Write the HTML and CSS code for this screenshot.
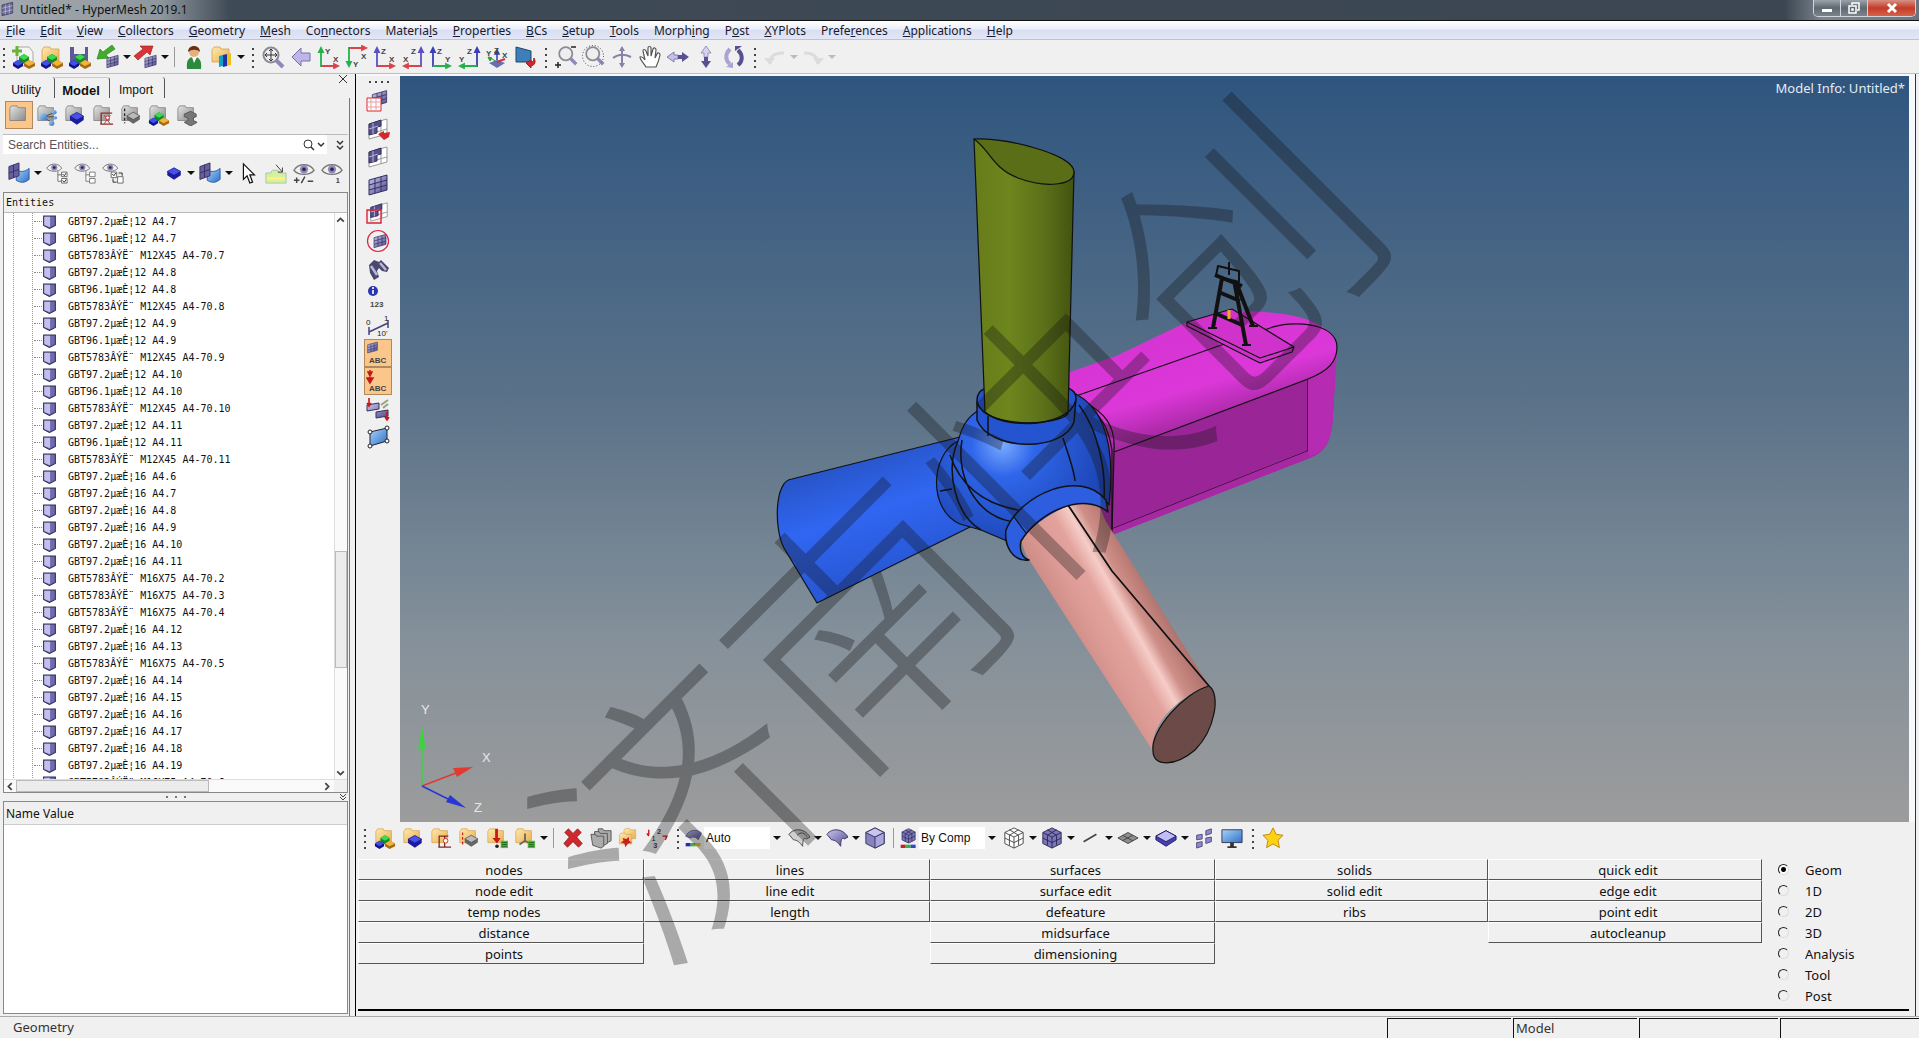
FILE: index.html
```
<!DOCTYPE html>
<html lang="en">
<head>
    <meta charset="UTF-8">
    <meta name="viewport" content="width=device-width, initial-scale=1.0">
    <title>Untitled* - HyperMesh 2019.1</title>
    <link rel="stylesheet" href="styles.css">
</head>
<body>
    <!-- Icon sprite, every icon on a 24x24 grid -->
    <svg class="sprite" aria-hidden="true">
        <defs>
            <linearGradient id="gGrey" x1="0" y1="0" x2="1" y2="1"><stop offset="0" stop-color="#e4e4e4"/><stop offset="1" stop-color="#8a8a8a"/></linearGradient>
            <linearGradient id="gGold" x1="0" y1="0" x2="1" y2="1"><stop offset="0" stop-color="#ffe9b0"/><stop offset="1" stop-color="#e9b04c"/></linearGradient>
            <linearGradient id="gViolet" x1="0" y1="0" x2="1" y2="1"><stop offset="0" stop-color="#c9c5ee"/><stop offset="1" stop-color="#4e4a8c"/></linearGradient>
            <linearGradient id="gBlue" x1="0" y1="0" x2="1" y2="1"><stop offset="0" stop-color="#a8d4f8"/><stop offset="1" stop-color="#2f6fc8"/></linearGradient>
        </defs>
        <symbol id="folder-grey" viewBox="0 0 24 24"><path d="M2 5l2-3h6l1 2h8v14H2z" fill="url(#gGrey)" stroke="#777" stroke-width=".8"/></symbol>
        <symbol id="folder-gold" viewBox="0 0 24 24"><path d="M2 5l2-3h6l1 2h8v13H2z" fill="url(#gGold)" stroke="#d2a24c" stroke-width=".8"/></symbol>
        <symbol id="cube-blue" viewBox="0 0 24 24"><path d="M3 10l9-5 9 5v5l-9 6-9-6z" fill="#1c1c9c"/><path d="M3 10l9-5 9 5-9 5z" fill="#4a50f0" stroke="#16167c" stroke-width=".8"/></symbol>
        <symbol id="cube-grey" viewBox="0 0 24 24"><path d="M3 10l9-5 9 5v5l-9 6-9-6z" fill="#666"/><path d="M3 10l9-5 9 5-9 5z" fill="#b9b9b9" stroke="#444" stroke-width=".8"/></symbol>
        <symbol id="cubes" viewBox="0 0 24 24">
            <path d="M7 12l5-3 5 3v4l-5 3-5-3z" fill="#17882a"/><path d="M7 12l5-3 5 3-5 3z" fill="#3bdc4c"/>
            <path d="M1 18l5-3 5 3v3l-5 3-5-3z" fill="#12128a"/><path d="M1 18l5-3 5 3-5 3z" fill="#3c52e6"/>
            <path d="M12 18l5-3 6 3v3l-6 3-5-3z" fill="#a76c10"/><path d="M12 18l5-3 6 3-6 3z" fill="#f0b440"/>
        </symbol>
        <symbol id="gold-cubes" viewBox="0 0 24 24"><use href="#folder-gold"/><use href="#cubes"/></symbol>
        <symbol id="gold-block" viewBox="0 0 24 24"><use href="#folder-gold"/><use href="#cube-blue" x="4" y="5" width="20" height="20"/></symbol>
        <symbol id="gold-load" viewBox="0 0 24 24"><use href="#folder-gold"/><path d="M10 22V10h10M9 22h14M16 10v12" fill="none" stroke="#7c2a20" stroke-width="1.4"/><circle cx="17" cy="15" r="2.5" fill="#fff" stroke="#c33"/></symbol>
        <symbol id="gold-tag" viewBox="0 0 24 24"><use href="#folder-gold"/><path d="M5 6v14" stroke="#c22" stroke-width="1.4" stroke-dasharray="3 2"/><use href="#cube-grey" x="5" y="5" width="19" height="19"/></symbol>
        <symbol id="gold-down" viewBox="0 0 24 24"><use href="#folder-gold"/><path d="M10 2h3v10h3l-4 6-5-6h3z" fill="#c5181a"/><circle cx="12" cy="21" r="2" fill="#222"/><path d="M16 15h8v8h-8z" fill="#4fc03c"/><path d="M17 17h6M17 19h6M17 21h6" stroke="#205c18"/></symbol>
        <symbol id="gold-sys" viewBox="0 0 24 24"><use href="#folder-gold"/><path d="M12 7v8l-6 4M12 15l5 3" fill="none" stroke="#666" stroke-width="2"/><path d="M15 15h8v8h-8z" fill="#4fc03c"/><path d="M16 17h6M16 19h6M16 21h6" stroke="#205c18"/></symbol>
        <symbol id="grey-link" viewBox="0 0 24 24"><use href="#folder-grey"/><path d="M8 14l13-5M8 14l12 0M8 14l10 7" stroke="#444"/><circle cx="8" cy="14" r="4" fill="url(#gBlue)"/><circle cx="20" cy="9" r="2.500" fill="url(#gBlue)"/><circle cx="21" cy="15" r="2" fill="url(#gBlue)"/><circle cx="17" cy="21" r="3" fill="url(#gBlue)"/></symbol>
        <symbol id="grey-block" viewBox="0 0 24 24"><use href="#folder-grey"/><use href="#cube-blue" x="4" y="5" width="20" height="20"/></symbol>
        <symbol id="grey-load" viewBox="0 0 24 24"><use href="#folder-grey"/><path d="M10 22V10h12M9 22h14" fill="none" stroke="#8c3028" stroke-width="1.500"/><path d="M13 12l7 10M20 12l-7 10" stroke="#c33"/><circle cx="17" cy="15" r="2" fill="#fff" stroke="#c33"/></symbol>
        <symbol id="grey-tag" viewBox="0 0 24 24"><use href="#folder-grey"/><path d="M5 5v16" stroke="#222" stroke-width="1.400" stroke-dasharray="3 2"/><use href="#cube-grey" x="5" y="5" width="19" height="19"/></symbol>
        <symbol id="grey-cubes" viewBox="0 0 24 24"><use href="#folder-grey"/><use href="#cubes"/></symbol>
        <symbol id="grey-beam" viewBox="0 0 24 24"><use href="#folder-grey"/><path d="M9 11l7-3 6 3v3l-3 1v3l4 2-7 4-7-4 4-2v-3l-4-1z" fill="#777" stroke="#555"/></symbol>
        <symbol id="new" viewBox="0 0 24 24"><path d="M5 2h12l4 5v14H5z" fill="#f4f4f4" stroke="#aaa"/><path d="M5 1v10M0 6h10" stroke="#69b234" stroke-width="3"/><use href="#cubes"/></symbol>
        <symbol id="save" viewBox="0 0 24 24"><path d="M2 2h18v18H4l-2-2z" fill="#5d5a94"/><path d="M6 2h11v7H6z" fill="#eee"/><use href="#cubes"/></symbol>
        <symbol id="mesh" viewBox="0 0 24 24"><path d="M3 7l18-5v15L3 22z" fill="url(#gViolet)" stroke="#34305e"/><path d="M9 5v15M15 4v15M3 12l18-5M3 17l18-5" stroke="#34305e" fill="none"/></symbol>
        <symbol id="import" viewBox="0 0 24 24"><use href="#mesh" x="9" y="9" width="15" height="15"/><path d="M16 0l3 4-9 6 3 3-12 1 3-10 3 3z" fill="#3fae2b" stroke="#24751a" stroke-width=".6"/></symbol>
        <symbol id="export" viewBox="0 0 24 24"><use href="#mesh" x="9" y="9" width="15" height="15"/><path d="M0 11l9-7-3-3h13l-3 9-3-3-9 8z" fill="#dc3436" stroke="#96191b" stroke-width=".6"/></symbol>
        <symbol id="person" viewBox="0 0 24 24"><path d="M5 24c-1-9 2-12 7-12s8 3 7 12z" fill="#2b8a3e"/><path d="M10 12l2 6 3-6z" fill="#fff"/><circle cx="12" cy="7" r="5" fill="#e6b07c"/><path d="M6 7c0-8 12-8 12 0-3-3-8-3-12 0z" fill="#6b2f14"/></symbol>
        <symbol id="palette" viewBox="0 0 24 24"><use href="#folder-gold"/><path d="M9 11l4-1v11l-4 1z" fill="#11a0c8"/><path d="M13 10l4-1v12l-4 1z" fill="#2330a8"/><path d="M17 9l4-1v12l-4 1z" fill="#e8c020"/></symbol>
        <symbol id="lens" viewBox="0 0 24 24"><path d="M15 15l7 7" stroke="#8e88bd" stroke-width="4"/><circle cx="10" cy="10" r="7.500" fill="#eee" stroke="#8b8b95" stroke-width="2"/></symbol>
        <symbol id="lens-fit" viewBox="0 0 24 24"><use href="#lens"/><path d="M10 4v12M4 10h12M8 6l2-2 2 2M8 14l2 2 2-2M6 8l-2 2 2 2M14 8l2 2-2 2" stroke="#333" fill="none"/></symbol>
        <symbol id="lens-pm" viewBox="0 0 24 24"><use href="#lens" x="3" width="21" height="21"/><path d="M1 20h6M4 17v6M17 2h5" stroke="#222" stroke-width="1.500"/></symbol>
        <symbol id="lens-box" viewBox="0 0 24 24"><use href="#lens" x="2" width="21" height="21"/><circle cx="11" cy="11" r="10.500" fill="none" stroke="#444" stroke-dasharray="1 2"/></symbol>
        <symbol id="back" viewBox="0 0 24 24"><path d="M3 12l9-9v5h9v8h-9v5z" fill="#bdb6e6" stroke="#7770ad"/></symbol>
        <symbol id="ax-v" viewBox="0 0 24 24"><path d="M4 22V6M2 7l2-4 2 4z" fill="currentColor" stroke="currentColor" stroke-width="1.800"/></symbol>
        <symbol id="ax-h" viewBox="0 0 24 24"><path d="M4 21h14M17 19l4 2-4 2z" fill="currentColor" stroke="currentColor" stroke-width="1.800"/></symbol>
        <symbol id="iso" viewBox="0 0 24 24"><path d="M12 15V6M12 5l-2 4h4z" stroke="#2f3fae" fill="#2f3fae" stroke-width="1.500"/><path d="M12 17L4 12M3 12l2 4 2-3z" stroke="#2f9a3c" fill="#2f9a3c"/><path d="M12 15l-8 3 8 5 8-5z" fill="#6670b0"/><path d="M12 17l8-3" stroke="#c33" stroke-width="2"/></symbol>
        <symbol id="view-shade" viewBox="0 0 24 24"><path d="M3 2l15 4v11L3 17z" fill="#3d7fb8" stroke="#23486b"/><path d="M13 18l5-3v2c2 0 3-1 3-4 2 4 1 7-3 8v2z" fill="#d4272a" stroke="#a31a1c"/></symbol>
        <symbol id="rot" viewBox="0 0 24 24"><path d="M12 3v18M3 13c5-4 12-4 18-1" fill="none" stroke="#8882a8" stroke-width="2"/><path d="M9 6l3-5 3 5zM9 18l3 5 3-5z" fill="#8882a8"/></symbol>
        <symbol id="hand" viewBox="0 0 24 24"><path d="M8 22c-2-4-6-7-6-10 2-1 3 0 5 3L5 6c0-2 2-2 3 0l2 5V3c0-2 3-2 3 0v8l2-7c1-2 3-1 3 1l-1 8 2-4c1-2 3-1 3 1-1 5-2 8-4 12z" fill="#fff" stroke="#555" stroke-width="1.200"/></symbol>
        <symbol id="lr" viewBox="0 0 24 24"><path d="M1 12l7-5v3h4v4H8v3z" fill="#c6c1e6" stroke="#6e68a0" stroke-width=".8"/><path d="M23 12l-7-5v3h-4v4h4v3z" fill="#575193"/></symbol>
        <symbol id="ud" viewBox="0 0 24 24"><path d="M12 1L7 8h3v4h4V8h3z" fill="#d6d2ee" stroke="#8882b8" stroke-width=".8"/><path d="M12 23l-5-7h3v-4h4v4h3z" fill="#575193"/></symbol>
        <symbol id="spin" viewBox="0 0 24 24"><path d="M8 4c-5 5-5 11 0 15" fill="none" stroke="#aaa4d2" stroke-width="4"/><path d="M16 5c5 5 5 11 0 15" fill="none" stroke="#575193" stroke-width="4"/><path d="M4 22l7-5v6z" fill="#aaa4d2"/><path d="M20 1l-7 5V1z" fill="#575193"/></symbol>
        <symbol id="undo" viewBox="0 0 24 24"><path d="M7 19c0-8 4-11 14-11" fill="none" stroke="#dcdcdc" stroke-width="3"/><path d="M1 13l6 7 5-7z" fill="#dcdcdc"/></symbol>
        <symbol id="redo" viewBox="0 0 24 24"><path d="M3 8c9 0 14 3 14 11" fill="none" stroke="#dcdcdc" stroke-width="3"/><path d="M12 13l5 7 6-7z" fill="#dcdcdc"/></symbol>
        <symbol id="comp" viewBox="0 0 24 24"><path d="M9 9c5 2 9 2 14-2v12c-5 4-9 4-14 1z" fill="url(#gBlue)" stroke="#285aa8"/><path d="M1 5l11-4v14L1 19z" fill="#6660a0" stroke="#34305e"/><path d="M6 3v14M1 12l11-4" stroke="#34305e"/></symbol>
        <symbol id="eye" viewBox="0 0 24 24"><path d="M1 9c5-8 17-8 22 0-5 6-17 6-22 0z" fill="#f2f2f2" stroke="#777" stroke-width="1.400"/><circle cx="12" cy="8" r="4.500" fill="#8d88b8"/><circle cx="12" cy="8" r="2" fill="#2b2850"/></symbol>
        <symbol id="eye-on" viewBox="0 0 24 24"><use href="#eye" width="18" height="18"/><path d="M13 10v11h4M13 14h4M17 11h6v5h-6zM17 18h6v5h-6z" fill="#fff" stroke="#666"/><path d="M18 13l2 2 2-3M18 20l2 2 2-3" fill="none" stroke="#222"/></symbol>
        <symbol id="eye-off" viewBox="0 0 24 24"><use href="#eye" width="18" height="18"/><path d="M13 10v11h4M13 14h4M17 11h6v5h-6zM17 18h6v5h-6z" fill="#fff" stroke="#777"/></symbol>
        <symbol id="eye-swap" viewBox="0 0 24 24"><use href="#eye" width="18" height="18"/><path d="M10 11h6v6h-6zM17 16h6v7h-6z" fill="#fff" stroke="#666"/><path d="M11 13l2 2 2-3M18 12h4v3M12 18v4h4" fill="none" stroke="#222"/></symbol>
        <symbol id="eye-pm" viewBox="0 0 24 24"><use href="#eye"/><path d="M1 20h6M4 17v6M9 23l4-7M16 21h6" stroke="#444" stroke-width="1.600"/></symbol>
        <symbol id="pointer" viewBox="0 0 24 24"><path d="M7 2v17l4-4 3 8 3-1-3-8h5z" fill="#fff" stroke="#111" stroke-width="1.300"/></symbol>
        <symbol id="pick" viewBox="0 0 24 24"><path d="M1 12h5l2-3h6l2 3h7v11H1z" fill="#d6efa0" stroke="#9fc6a4"/><path d="M2 18h20" stroke="#fff07a" stroke-width="3"/><path d="M12 3l7 8M19 6v5h-5" stroke="#333" fill="none"/></symbol>
        <symbol id="m-box" viewBox="0 0 24 24"><use href="#mesh" x="3" width="21" height="19"/><path d="M1 9h14v13H1z" fill="#fff" stroke="#d23"/><path d="M5 9v13M10 9v13M1 13h14M1 18h14" stroke="#e99"/></symbol>
        <symbol id="m-wire" viewBox="0 0 24 24"><path d="M3 7l18-5v15L3 22zM15 4v15M3 17l18-5" fill="#fff" stroke="#999"/><path d="M3 7l12-4v6l-4 1v6l-8 2z" fill="#54508c" stroke="#34305e"/><path d="M7 6v11M3 12l9-3" stroke="#b8b4dc"/></symbol>
        <symbol id="m-arrow" viewBox="0 0 24 24"><use href="#m-wire"/><path d="M12 17l6-3v2l6-1-1 5-5 3z" fill="#d4272a"/></symbol>
        <symbol id="m-find" viewBox="0 0 24 24"><use href="#m-wire" x="2" width="22" height="22"/><path d="M1 9h14v13H1z" fill="none" stroke="#d23" stroke-width="1.400"/></symbol>
        <symbol id="m-circle" viewBox="0 0 24 24"><use href="#mesh" x="6" y="4" width="16" height="16"/><circle cx="12" cy="12" r="10.500" fill="none" stroke="#d24" stroke-width="1.200"/></symbol>
        <symbol id="binoc" viewBox="0 0 24 24"><path d="M3 8l5-5 5 2 2-2 8 8-2 4-5-1-3-3-2 3 2 6-5 3-4-7z" fill="#4b4870"/><path d="M5 9l6 9M14 6l6 7" stroke="#b9b6d8" stroke-width="2.500"/></symbol>
        <symbol id="m-load" viewBox="0 0 24 24"><path d="M1 8l12-2v6L1 14zM10 15l12-2v6l-12 2z" fill="url(#gViolet)" stroke="#34305e"/><path d="M3 1v7M21 15v8M1 6l2 3 2-3M19 20l2 3 2-3" stroke="#c5181a" stroke-width="1.600" fill="none"/><path d="M15 8l7-5M17 11l5-4" stroke="#99a37a" stroke-width="2"/></symbol>
        <symbol id="quad" viewBox="0 0 24 24"><path d="M4 7l17-4v13L4 21z" fill="url(#gBlue)" stroke="#223"/><g fill="#fff" stroke="#222"><circle cx="4" cy="7" r="2"/><circle cx="21" cy="3" r="2"/><circle cx="21" cy="16" r="2"/><circle cx="4" cy="21" r="2"/></g></symbol>
        <symbol id="del" viewBox="0 0 24 24"><path d="M3 6l4-4 5 5 5-5 4 4-5 5 6 7-4 4-6-6-6 6-4-4 6-7z" fill="#d0282c" stroke="#851418" stroke-width=".8"/></symbol>
        <symbol id="cards" viewBox="0 0 24 24"><g fill="#ababab" stroke="#555"><path d="M9 2h5l1 2h8v11l-4 2H9z"/><path d="M5 5h5l1 2h8v11l-4 2H5z"/><path d="M1 8h5l1 2h8v11l-3 2-9-3z"/></g></symbol>
        <symbol id="gold-x" viewBox="0 0 24 24"><use href="#folder-gold" x="5" width="18" height="18"/><use href="#folder-gold" y="5" width="19" height="19"/><path d="M5 12l4 1 3-2v4l3 2-4 1-3 4-1-4-4-1 3-2z" fill="#c9211e"/></symbol>
        <symbol id="surf-mode" viewBox="0 0 24 24"><path d="M2 10C5 3 14 0 21 6l-4 8c-3-4-7-4-9-2z" fill="url(#gViolet)" stroke="#5c5898"/><path d="M2 18h6v4H2z" fill="#2330a8"/><path d="M8 18h6v4H8z" fill="#38b04a"/><path d="M14 18h6v4h-6z" fill="#e8c020"/></symbol>
        <symbol id="surf-grey" viewBox="0 0 24 24"><path d="M1 8C6 1 18 1 24 11l-4 2c-2-2-4 0-4 8-3-4-6-7-10-7z" fill="#cfcfcf" stroke="#444"/><path d="M10 9c4-4 8-3 11 2" fill="none" stroke="#444"/></symbol>
        <symbol id="surf-violet" viewBox="0 0 24 24"><path d="M1 8C6 1 18 1 24 11l-4 2c-2-2-4 0-4 8-3-4-6-7-10-7z" fill="url(#gViolet)" stroke="#34305e"/></symbol>
        <symbol id="box" viewBox="0 0 24 24"><path d="M12 1l10 5v12l-10 5-10-5V6z" fill="#8783c0" stroke="#34305e"/><path d="M12 1l10 5-10 5L2 6z" fill="#c9c5ee" stroke="#34305e"/><path d="M12 11v12l10-5V6z" fill="#aaa6dc" stroke="#34305e"/></symbol>
        <symbol id="grid-lines" viewBox="0 0 24 24"><path d="M12 1l10 5v12l-10 5-10-5V6zM2 6l10 5 10-5M12 11v12M2 12l10 5 10-5M7 3l10 6v11M17 3L7 9v11" fill="none" stroke="currentColor"/></symbol>
        <symbol id="box-wire" viewBox="0 0 24 24"><path d="M12 1l10 5v12l-10 5-10-5V6z" fill="#fff"/><use href="#grid-lines" color="#444"/></symbol>
        <symbol id="box-mesh" viewBox="0 0 24 24"><path d="M12 1l10 5v12l-10 5-10-5V6z" fill="#7a76b8"/><use href="#grid-lines" color="#2a2650"/></symbol>
        <symbol id="by-comp" viewBox="0 0 24 24"><use href="#box-mesh" x="2" width="19" height="19"/><path d="M2 20h6v4H2z" fill="#c5202a"/><path d="M8 20h6v4H8z" fill="#38b04a"/><path d="M14 20h6v4h-6z" fill="#3347c8"/></symbol>
        <symbol id="line" viewBox="0 0 24 24"><path d="M5 16L19 8" stroke="#444" stroke-width="1.800"/></symbol>
        <symbol id="shell" viewBox="0 0 24 24"><path d="M1 12l11-6 11 6-11 6z" fill="#8d8d8d" stroke="#444"/><path d="M6 9l11 6M17 9L6 15" stroke="#444"/></symbol>
        <symbol id="slab" viewBox="0 0 24 24"><path d="M1 10l11-6 11 6v4l-11 7-11-7z" fill="#4540b0" stroke="#1d1a66"/><path d="M1 10l11-6 11 6-11 6z" fill="#c2bdf4" stroke="#1d1a66"/></symbol>
        <symbol id="shrink" viewBox="0 0 24 24"><path d="M4 9l6-1v5l-6 1zM14 4l6-2v5l-6 2zM4 17l6-1v5l-6 2zM14 12l6-1v5l-6 2z" fill="#8f8bc4" stroke="#4a4680"/></symbol>
        <symbol id="monitor" viewBox="0 0 24 24"><path d="M1 3h22v14H1z" fill="url(#gBlue)" stroke="#335"/><path d="M10 17h4v4h3v2H7v-2h3z" fill="#333"/></symbol>
        <symbol id="star" viewBox="0 0 24 24"><path d="M12 1l3.500 7 7.500 1-5.500 5.500 1.500 8-7-4-7 4 1.500-8L1 9l7.500-1z" fill="#fcd116" stroke="#b8860b"/></symbol>
        <symbol id="node" viewBox="0 0 24 24"><path d="M2 2h20v16l-10 5-10-5z" fill="#6f6bb0" stroke="#34305e" stroke-width="2"/><path d="M3 3h10v18l-10-4z" fill="#c2c0ea"/></symbol>
        <symbol id="logo" viewBox="0 0 24 24"><path d="M3 6l16-4v16L3 22z" fill="#6d6a96" stroke="#2f2c50"/><path d="M8 5v15M14 4v15M3 11l16-4M3 17l16-4" stroke="#c7c5df"/></symbol>
    </svg>

    <header class="titlebar">
        <svg class="logo"><use href="#logo"/></svg>
        <h1>Untitled* - HyperMesh 2019.1</h1>
        <div class="window-buttons">
            <button aria-label="Minimize"><svg viewBox="0 0 14 12"><path d="M2 7h10v3H2z" fill="#fff"/></svg></button>
            <button aria-label="Restore"><svg viewBox="0 0 14 12"><path d="M5 3V1h7v7h-2M2 4h7v7H2zM5 7h1v1H5z" fill="none" stroke="#fff" stroke-width="1.500"/></svg></button>
            <button class="close" aria-label="Close"><svg viewBox="0 0 14 12"><path d="M3 2l8 8M11 2l-8 8" stroke="#fff" stroke-width="3"/></svg></button>
        </div>
    </header>

    <nav class="menubar">
        <button><u>F</u>ile</button>
        <button><u>E</u>dit</button>
        <button><u>V</u>iew</button>
        <button><u>C</u>ollectors</button>
        <button><u>G</u>eometry</button>
        <button><u>M</u>esh</button>
        <button>Co<u>n</u>nectors</button>
        <button>Materia<u>l</u>s</button>
        <button><u>P</u>roperties</button>
        <button><u>B</u>Cs</button>
        <button><u>S</u>etup</button>
        <button><u>T</u>ools</button>
        <button>Morph<u>i</u>ng</button>
        <button>P<u>o</u>st</button>
        <button><u>X</u>YPlots</button>
        <button>Prefe<u>r</u>ences</button>
        <button><u>A</u>pplications</button>
        <button><u>H</u>elp</button>
    </nav>

    <div class="toolbar top" role="toolbar" aria-label="Standard">
        <div class="group">
            <i class="grip"></i>
            <button aria-label="New"><svg><use href="#new"/></svg></button>
            <button aria-label="Open"><svg><use href="#gold-cubes"/></svg></button>
            <button aria-label="Save"><svg><use href="#save"/></svg></button>
            <button aria-label="Import"><svg><use href="#import"/></svg></button>
            <button class="drop" aria-label="Import options"></button>
            <button aria-label="Export"><svg><use href="#export"/></svg></button>
            <button class="drop" aria-label="Export options"></button>
            <i class="sep"></i>
            <button aria-label="User profile"><svg><use href="#person"/></svg></button>
            <button aria-label="Color folders"><svg><use href="#palette"/></svg></button>
            <button class="drop" aria-label="Color options"></button>
        </div>
        <div class="group">
            <i class="grip"></i>
            <button aria-label="Fit"><svg><use href="#lens-fit"/></svg></button>
            <button aria-label="Previous view"><svg><use href="#back"/></svg></button>
            <button aria-label="XY top"><svg viewBox="0 0 24 24"><use href="#ax-v" color="#22b14c"/><use href="#ax-h" color="#d9434a"/><text x="8" y="9" class="glyph">Y</text><text x="16" y="17" class="glyph">X</text></svg></button>
            <button aria-label="XY bottom"><svg viewBox="0 0 24 24"><g class="flip"><use href="#ax-v" color="#22b14c"/><use href="#ax-h" color="#d9434a"/></g><text x="16" y="14" class="glyph">X</text><text x="8" y="22" class="glyph">Y</text></svg></button>
            <button aria-label="XZ left"><svg viewBox="0 0 24 24"><use href="#ax-v" color="#5a52c0"/><use href="#ax-h" color="#d9434a"/><text x="8" y="9" class="glyph">Z</text><text x="16" y="17" class="glyph">X</text></svg></button>
            <button aria-label="XZ right"><svg viewBox="0 0 24 24"><g class="mirror"><use href="#ax-v" color="#5a52c0"/><use href="#ax-h" color="#d9434a"/></g><text x="10" y="9" class="glyph">Z</text><text x="2" y="17" class="glyph">X</text></svg></button>
            <button aria-label="YZ front"><svg viewBox="0 0 24 24"><use href="#ax-v" color="#3a3fb8"/><use href="#ax-h" color="#22b14c"/><text x="8" y="9" class="glyph">Z</text><text x="16" y="17" class="glyph">Y</text></svg></button>
            <button aria-label="YZ back"><svg viewBox="0 0 24 24"><g class="mirror"><use href="#ax-v" color="#3a3fb8"/><use href="#ax-h" color="#22b14c"/></g><text x="10" y="9" class="glyph">Z</text><text x="2" y="17" class="glyph">Y</text></svg></button>
            <button aria-label="Isometric"><svg viewBox="0 0 24 24"><use href="#iso"/><text x="1" y="11" class="glyph">Y</text><text x="9" y="8" class="glyph">Z</text><text x="17" y="13" class="glyph">X</text></svg></button>
            <button aria-label="Reverse view"><svg><use href="#view-shade"/></svg></button>
        </div>
        <div class="group">
            <i class="grip"></i>
            <button aria-label="Zoom"><svg><use href="#lens-pm"/></svg></button>
            <button aria-label="Circle zoom"><svg><use href="#lens-box"/></svg></button>
            <button aria-label="Rotate"><svg><use href="#rot"/></svg></button>
            <button aria-label="Pan"><svg><use href="#hand"/></svg></button>
            <button aria-label="Rotate left or right"><svg><use href="#lr"/></svg></button>
            <button aria-label="Rotate up or down"><svg><use href="#ud"/></svg></button>
            <button aria-label="Spin"><svg><use href="#spin"/></svg></button>
        </div>
        <div class="group">
            <i class="grip"></i>
            <button aria-label="Undo" disabled><svg><use href="#undo"/></svg></button>
            <button class="drop" aria-label="Undo list" disabled></button>
            <button aria-label="Redo" disabled><svg><use href="#redo"/></svg></button>
            <button class="drop" aria-label="Redo list" disabled></button>
        </div>
    </div>

    <main class="main">
        <aside class="browser">
            <div class="tabs">
                <button>Utility</button>
                <button class="active">Model</button>
                <button>Import</button>
                <button class="close-tab" aria-label="Close browser"><svg viewBox="0 0 10 10"><path d="M1 1l8 8M9 1L1 9" stroke="#333"/></svg></button>
            </div>
            <div class="browser-body">
                <div class="toolbar views">
                    <button class="on" aria-label="Model view"><svg><use href="#folder-grey"/></svg></button>
                    <button aria-label="Assembly view"><svg><use href="#grey-link"/></svg></button>
                    <button aria-label="Component view"><svg><use href="#grey-block"/></svg></button>
                    <button aria-label="Load view"><svg><use href="#grey-load"/></svg></button>
                    <button aria-label="Property view"><svg><use href="#grey-tag"/></svg></button>
                    <button aria-label="Material view"><svg><use href="#grey-cubes"/></svg></button>
                    <button aria-label="Beam view"><svg><use href="#grey-beam"/></svg></button>
                </div>
                <div class="search">
                    <input type="text" placeholder="Search Entities..." aria-label="Search Entities">
                    <button aria-label="Search"><svg viewBox="0 0 24 12"><circle cx="6" cy="5" r="4" fill="none" stroke="#333"/><path d="M9 8l3 3" stroke="#333" stroke-width="1.500"/><path d="M16 4l3 3 3-3" fill="none" stroke="#333" stroke-width="1.500"/></svg></button>
                    <button class="more" aria-label="Advanced search"><svg viewBox="0 0 24 12"><path d="M9 2l3 3 3-3M9 7l3 3 3-3" fill="none" stroke="#333" stroke-width="1.500"/></svg></button>
                </div>
                <div class="toolbar display">
                    <button aria-label="Entity"><svg><use href="#comp"/></svg></button>
                    <button class="drop" aria-label="Entity options"></button>
                    <button aria-label="Show all"><svg><use href="#eye-on"/></svg></button>
                    <button aria-label="Hide all"><svg><use href="#eye-off"/></svg></button>
                    <button aria-label="Reverse display"><svg><use href="#eye-swap"/></svg></button>
                    <i class="spacer"></i>
                    <button class="small" aria-label="Component"><svg><use href="#cube-blue"/></svg></button>
                    <button class="drop" aria-label="Component options"></button>
                    <button aria-label="Elements"><svg><use href="#comp"/></svg></button>
                    <button class="drop" aria-label="Element options"></button>
                    <button aria-label="Selector"><svg><use href="#pointer"/></svg></button>
                    <button aria-label="Add to panel collector"><svg><use href="#pick"/></svg></button>
                    <button aria-label="Show or hide"><svg><use href="#eye-pm"/></svg></button>
                    <button aria-label="Isolate"><svg viewBox="0 0 24 24"><use href="#eye"/><text x="16" y="23" class="glyph">1</text></svg></button>
                </div>
                <section class="tree">
                    <h2>Entities</h2>
                    <div class="tree-view">
                        <ul id="entities"></ul>
                        <div class="vscroll">
                            <button aria-label="Scroll up"><svg viewBox="0 0 10 10"><path d="M2 7l3-3 3 3" fill="none" stroke="#444" stroke-width="1.600"/></svg></button>
                            <i class="before"></i>
                            <i class="thumb"></i>
                            <i class="after"></i>
                            <button aria-label="Scroll down"><svg viewBox="0 0 10 10"><path d="M2 3l3 3 3-3" fill="none" stroke="#444" stroke-width="1.600"/></svg></button>
                        </div>
                    </div>
                    <div class="hscroll">
                        <button aria-label="Scroll left"><svg viewBox="0 0 10 10"><path d="M7 2L4 5l3 3" fill="none" stroke="#444" stroke-width="1.600"/></svg></button>
                        <i class="thumb"></i>
                        <i class="after"></i>
                        <button aria-label="Scroll right"><svg viewBox="0 0 10 10"><path d="M3 2l3 3-3 3" fill="none" stroke="#444" stroke-width="1.600"/></svg></button>
                        <i class="corner"></i>
                    </div>
                </section>
                <div class="splitter"><i></i><i></i><i></i><svg viewBox="0 0 10 8"><path d="M2 1l3 3 3-3M2 4l3 3 3-3" fill="none" stroke="#444"/></svg></div>
                <section class="properties">
                    <h2>Name Value</h2>
                </section>
            </div>
        </aside>

        <section class="work">
            <div class="stage">
                <div class="sidebar" role="toolbar" aria-label="Display">
                    <i class="grip flat"></i>
                    <button aria-label="Mask"><svg><use href="#m-box"/></svg></button>
                    <button aria-label="Reverse mask"><svg><use href="#m-arrow"/></svg></button>
                    <button aria-label="Unmask adjacent"><svg><use href="#m-wire"/></svg></button>
                    <button aria-label="Unmask all"><svg><use href="#mesh"/></svg></button>
                    <button aria-label="Unmask shown"><svg><use href="#m-find"/></svg></button>
                    <button aria-label="Spherical clip"><svg><use href="#m-circle"/></svg></button>
                    <button aria-label="Find"><svg><use href="#binoc"/></svg></button>
                    <button aria-label="Numbers"><svg viewBox="0 0 24 24"><circle cx="7" cy="6" r="5" fill="#2a35b0"/><path d="M7 5v4M7 2v2" stroke="#fff" stroke-width="1.600"/><text x="4" y="22" class="glyph">123</text></svg></button>
                    <button aria-label="Distance"><svg viewBox="0 0 24 24"><path d="M3 19L22 10M3 14v8M22 7v8" stroke="#45427c" stroke-width="1.500"/><text x="0" y="12" class="glyph thin">0</text><text x="18" y="8" class="glyph thin">1</text><text x="11" y="23" class="glyph thin">10'</text></svg></button>
                    <button class="on" aria-label="Element handles"><svg viewBox="0 0 24 24"><use href="#mesh" width="13" height="13"/><text x="3" y="22" class="glyph">ABC</text></svg></button>
                    <button class="on" aria-label="Load handles"><svg viewBox="0 0 24 24"><path d="M4 1v12M1 9l3 5 3-5zM2 3h4l-2 4z" stroke="#c5181a" stroke-width="1.500" fill="#c5181a"/><text x="3" y="22" class="glyph">ABC</text></svg></button>
                    <button aria-label="Load display"><svg><use href="#m-load"/></svg></button>
                    <button aria-label="Fixed points"><svg><use href="#quad"/></svg></button>
                </div>
                <div class="viewport">
                    <svg class="model" viewBox="400 76 1509 746" role="img" aria-label="Turbine hub model">
                        <defs>
                            <linearGradient id="green" x1="974" x2="1074" gradientUnits="userSpaceOnUse"><stop offset="0" stop-color="#667c1a"/><stop offset=".35" stop-color="#6d861d"/><stop offset=".7" stop-color="#5c7019"/><stop offset="1" stop-color="#43530f"/></linearGradient>
                            <linearGradient id="bladeBlue" x1="850" y1="465" x2="885" y2="570" gradientUnits="userSpaceOnUse"><stop offset="0" stop-color="#2856cc"/><stop offset=".45" stop-color="#3066f2"/><stop offset="1" stop-color="#2858d6"/></linearGradient>
                            <radialGradient id="hub" cx="1003" cy="445" r="105" gradientUnits="userSpaceOnUse"><stop offset="0" stop-color="#79aaff"/><stop offset=".3" stop-color="#2f66ea"/><stop offset="1" stop-color="#1d45b4"/></radialGradient>
                            <linearGradient id="pink" x1="1075" y1="665" x2="1170" y2="612" gradientUnits="userSpaceOnUse"><stop offset="0" stop-color="#c68580"/><stop offset=".3" stop-color="#dc9a95"/><stop offset=".5" stop-color="#e3a39d"/><stop offset=".64" stop-color="#f6cdc8"/><stop offset=".75" stop-color="#cf8f89"/><stop offset="1" stop-color="#a96c66"/></linearGradient>
                            <linearGradient id="magenta" x1="1190" y1="330" x2="1215" y2="420" gradientUnits="userSpaceOnUse"><stop offset="0" stop-color="#d734d4"/><stop offset=".6" stop-color="#dc38d9"/><stop offset="1" stop-color="#a829a4"/></linearGradient>
                        </defs>
                        <g stroke="#111" stroke-width="1.200" stroke-linejoin="round">
                            <!-- nacelle -->
                            <path d="M1070 372L1116 356L1187 322C1215 312 1240 309 1262 312C1300 314 1337 325 1337 350L1333 415C1332 440 1326 452 1310 458L1112 535L1098 505L1070 400z" fill="url(#magenta)" stroke="none"/>
                            <path d="M1114 452L1308 379V451L1112 529z" fill="#992597"/>
                            <path d="M1308 379C1328 371 1337 362 1337 347L1333 415C1332 440 1326 452 1308 457z" fill="#b52bb1" stroke="none"/>
                            <path d="M1112 529L1308 451L1310 458L1112 535z" fill="#a828a4" stroke="none"/>
                            <path d="M1076 396L1270 328C1290 320 1337 322 1337 347C1337 362 1328 371 1308 379M1084 402C1104 412 1116 425 1114 452M1112 535V450C1108 425 1098 412 1088 408" fill="none"/>
                            <path d="M1187 322L1232 309L1294 347L1292 352L1260 363L1187 326z" fill="#cf33cc"/>
                            <path d="M1187 322L1260 358L1294 347" fill="none"/>
                            <!-- mast -->
                            <path d="M1222 278L1213 328M1234 280L1246 345M1236 282L1253 326M1221 293L1240 301M1217 314L1242 325M1215 275L1242 286" fill="none" stroke-width="4"/>
                            <path d="M1218 266L1239 271V282L1216 276zM1229 262V275M1208 328h9M1242 345h9M1249 326h9" fill="none" stroke-width="2"/>
                            <path d="M1229 310v9" stroke="#f5a623" stroke-width="3"/>
                            <!-- left blade -->
                            <path d="M792 479C774 480 774 530 784 548L817 603L970 527L960 437z" fill="url(#bladeBlue)"/>
                            <!-- hub -->
                            <path d="M979 410C962 420 960 436 958 441C930 455 928 510 960 524L981 530L1007 541L1062 512L1104 499L1109 505C1114 460 1110 412 1076 394z" fill="url(#hub)"/>
                            <path d="M962 440C955 480 980 520 1016 522M958 441C945 470 955 515 981 530M950 455C962 490 990 505 1018 510M1063 438C1070 460 1074 470 1075 481M940 491L952 489M1079 405C1098 430 1106 470 1104 499" fill="none" stroke-width="1.500"/>
                            <!-- top collar and blade -->
                            <path d="M977 400C977 388 990 385 1005 386L1060 386C1074 388 1076 394 1076 398L1074 422C1064 452 990 452 977 420z" fill="#2454cf" stroke-width="1.500"/>
                            <path d="M974 139L985 412C1000 426 1055 426 1068 414L1074 172z" fill="url(#green)"/>
                            <path d="M974 139C1010 138 1074 155 1074 172C1074 186 1045 188 1018 178C992 168 990 150 974 139z" fill="#5a6e18"/>
                            <path d="M977 402C985 430 1068 432 1076 400M988 416v20" fill="none" stroke-width="1.500"/>
                            <!-- lower blade and collar -->
                            <path d="M1021 541C1035 520 1072 498 1098 502L1105 520L1209 686C1190 690 1148 720 1153 751L1026 555z" fill="url(#pink)" stroke="none"/>
                            <path d="M1068 505L1112 571L1209 686" fill="none" stroke-width="1.800"/>
                            <path d="M1209 686C1221 694 1215 730 1195 750C1175 767 1153 767 1153 751C1150 730 1185 692 1209 686z" fill="#6b4a48"/>
                            <path d="M1006 530C1020 495 1080 468 1106 500L1108 512C1085 492 1040 510 1021 541C1019 550 1022 558 1029 560C1012 562 1004 545 1006 530z" fill="#2c5edf" stroke-width="1.500"/>
                            <path d="M1014 517L1026 533" fill="none"/>
                        </g>
                        <!-- axis triad -->
                        <g class="triad">
                            <path d="M422 786V745" stroke="#3fd046" stroke-width="1.500"/><path d="M422 726l4 24h-8z" fill="#3fd046"/>
                            <path d="M422 786l34-13" stroke="#e23a30" stroke-width="1.500"/><path d="M473 767l-20 1 4 9z" fill="#e23a30"/>
                            <path d="M422 786l26 13" stroke="#2a35d8" stroke-width="1.500"/><path d="M466 808l-16-13-4 7z" fill="#2a35d8"/>
                            <text x="421" y="714">Y</text>
                            <text x="482" y="762">X</text>
                            <text x="474" y="812">Z</text>
                        </g>
                    </svg>
                    <p class="model-info">Model Info: Untitled*</p>
                </div>
            </div>

            <div class="toolbar bottom" role="toolbar" aria-label="Visualization">
                <div class="group">
                    <i class="grip"></i>
                    <button aria-label="Materials"><svg><use href="#gold-cubes"/></svg></button>
                    <button aria-label="Components"><svg><use href="#gold-block"/></svg></button>
                    <button aria-label="Load collectors"><svg><use href="#gold-load"/></svg></button>
                    <button aria-label="Properties"><svg><use href="#gold-tag"/></svg></button>
                    <button aria-label="Load steps"><svg><use href="#gold-down"/></svg></button>
                    <button aria-label="Systems"><svg><use href="#gold-sys"/></svg></button>
                    <button class="drop" aria-label="System options"></button>
                    <i class="sep"></i>
                    <button aria-label="Delete"><svg><use href="#del"/></svg></button>
                    <button aria-label="Card edit"><svg><use href="#cards"/></svg></button>
                    <button aria-label="Organize"><svg><use href="#gold-x"/></svg></button>
                    <button aria-label="Renumber"><svg viewBox="0 0 24 24"><text x="12" y="8" class="glyph">2</text><text x="6" y="15" class="glyph thin">1</text><text x="8" y="23" class="glyph">3</text><path d="M3 3v6M1 7l2 3M18 10h5l-2 4" stroke="#c5181a" stroke-width="1.500" fill="none"/></svg></button>
                </div>
                <div class="group">
                    <i class="grip"></i>
                    <label class="combo"><svg><use href="#surf-mode"/></svg><select aria-label="Geometry color mode"><option>Auto</option></select><i class="arrow"></i></label>
                    <button aria-label="Wireframe geometry"><svg><use href="#surf-grey"/></svg></button>
                    <button class="drop" aria-label="Wireframe options"></button>
                    <button aria-label="Shaded geometry"><svg><use href="#surf-violet"/></svg></button>
                    <button class="drop" aria-label="Shaded options"></button>
                    <button aria-label="Transparency"><svg><use href="#box"/></svg></button>
                    <i class="sep"></i>
                    <label class="combo"><svg><use href="#by-comp"/></svg><select aria-label="Element color mode"><option>By Comp</option></select><i class="arrow"></i></label>
                    <button aria-label="Wireframe elements"><svg><use href="#box-wire"/></svg></button>
                    <button class="drop" aria-label="Wireframe element options"></button>
                    <button aria-label="Shaded elements"><svg><use href="#box-mesh"/></svg></button>
                    <button class="drop" aria-label="Shaded element options"></button>
                    <button aria-label="1D elements"><svg><use href="#line"/></svg></button>
                    <button class="drop" aria-label="1D options"></button>
                    <button aria-label="2D elements"><svg><use href="#shell"/></svg></button>
                    <button class="drop" aria-label="2D options"></button>
                    <button aria-label="3D elements"><svg><use href="#slab"/></svg></button>
                    <button class="drop" aria-label="3D options"></button>
                    <button aria-label="Shrink elements"><svg><use href="#shrink"/></svg></button>
                    <button aria-label="Visualization"><svg><use href="#monitor"/></svg></button>
                </div>
                <div class="group">
                    <i class="grip"></i>
                    <button aria-label="Favorites"><svg><use href="#star"/></svg></button>
                </div>
            </div>

            <div class="panels">
                <div class="column">
                    <button>nodes</button>
                    <button>node edit</button>
                    <button>temp nodes</button>
                    <button>distance</button>
                    <button>points</button>
                </div>
                <div class="column">
                    <button>lines</button>
                    <button>line edit</button>
                    <button>length</button>
                </div>
                <div class="column">
                    <button>surfaces</button>
                    <button>surface edit</button>
                    <button>defeature</button>
                    <button>midsurface</button>
                    <button>dimensioning</button>
                </div>
                <div class="column">
                    <button>solids</button>
                    <button>solid edit</button>
                    <button>ribs</button>
                </div>
                <div class="column">
                    <button>quick edit</button>
                    <button>edge edit</button>
                    <button>point edit</button>
                    <button>autocleanup</button>
                </div>
                <div class="pages">
                    <label><input type="radio" name="page" checked>Geom</label>
                    <label><input type="radio" name="page">1D</label>
                    <label><input type="radio" name="page">2D</label>
                    <label><input type="radio" name="page">3D</label>
                    <label><input type="radio" name="page">Analysis</label>
                    <label><input type="radio" name="page">Tool</label>
                    <label><input type="radio" name="page">Post</label>
                </div>
            </div>
        </section>
    </main>

    <footer class="statusbar">
        <span class="message">Geometry</span>
        <span class="cell"></span>
        <span class="cell">Model</span>
        <span class="cell wide"></span>
        <span class="cell wide"></span>
    </footer>

    <div class="watermark" aria-hidden="true"><span>济南快创</span></div>

    <script>
        // run of washers with consecutive suffixes
        const washers = (std, size, from, to) => {
            const rows = [];
            for (let i = from; i <= to; i++) rows.push(`${std}µæÈ¦${size} A4.${i}`);
            return rows;
        };
        const bolt = (size, i) => `GBT5783ÂÝË¨ ${size} A4-70.${i}`;

        let rows = [];
        for (let i = 7; i <= 11; i++) {
            rows.push(`GBT97.2µæÈ¦12 A4.${i}`, `GBT96.1µæÈ¦12 A4.${i}`, bolt('M12X45', i));
        }
        rows = rows.concat(
            washers('GBT97.2', 16, 6, 11),
            [bolt('M16X75', 2), bolt('M16X75', 3), bolt('M16X75', 4)],
            washers('GBT97.2', 16, 12, 13),
            [bolt('M16X75', 5)],
            washers('GBT97.2', 16, 14, 19),
            [bolt('M16X75', 6)]
        );

        document.getElementById('entities').innerHTML = rows
            .map(name => `<li><svg><use href="#node"/></svg><span>${name}</span></li>`)
            .join('');
    </script>
</body>
</html>
```

FILE: styles.css
```
* {
    box-sizing: border-box;
}

body {
    margin: 0;
    height: 100vh;
    display: flex;
    flex-direction: column;
    overflow: hidden;
    background: #f0f0f0;
    color: #111;
    font-family: "Noto Sans", "Open Sans", sans-serif;
    font-size: 12px;
}

h1, h2, p, ul {
    margin: 0;
    padding: 0;
    font-weight: normal;
}

button {
    padding: 0;
    border: 0;
    background: none;
    color: inherit;
    font: inherit;
}

.sprite {
    position: absolute;
    width: 0;
    height: 0;
}

.glyph {
    font: bold 8px "Liberation Sans", sans-serif;
    fill: #444;
}

.glyph.thin {
    font-weight: normal;
    fill: #222;
}

.flip {
    transform: translate(0, 24px) scale(1, -1);
}

.mirror {
    transform: translate(24px, 0) scale(-1, 1);
}

/* Title bar */
.titlebar {
    height: 21px;
    display: flex;
    align-items: flex-start;
    background:
        radial-gradient(ellipse at 200px 10px, #5c8a72 0, transparent 24px),
        radial-gradient(ellipse at 260px 14px, #7d8a90 0, transparent 30px),
        radial-gradient(ellipse at 342px 14px, #5a9cc4 0, transparent 34px),
        radial-gradient(ellipse at 425px 18px, #8292a2 0, transparent 28px),
        linear-gradient(90deg, #a3a9ae 0, #8f979e 160px, #3e4a56 230px, #3b4652 93%, #7c8690 95%, #6a747e);
    border-bottom: 1px solid #111;
}

.logo {
    width: 16px;
    height: 18px;
}

.titlebar h1 {
    flex: 1;
    padding-left: 4px;
    font-size: 12px;
    line-height: 20px;
}

.window-buttons {
    display: flex;
    height: 17px;
    margin-right: 3px;
    border: 1px solid #d0d6dc;
    border-top: 0;
    border-radius: 0 0 5px 5px;
    overflow: hidden;
}

.window-buttons button {
    width: 27px;
    background: linear-gradient(#9aa2aa, #5f6971 50%, #7a848c);
    border-right: 1px solid #d0d6dc;
}

.window-buttons .close {
    width: 47px;
    border-right: 0;
    background: linear-gradient(#d99084, #c23c28 50%, #d8604a);
}

.window-buttons svg {
    display: block;
    width: 14px;
    height: 12px;
    margin: auto;
}

/* Menu bar */
.menubar {
    height: 19px;
    display: flex;
    gap: 15px;
    padding-left: 6px;
    background: linear-gradient(#fff, #eceffa 45%, #d9dff2 50%, #e2e6f6);
    border-bottom: 1px solid #b8c4da;
}

.menubar button {
    line-height: 19px;
    color: #1a1a2e;
}

/* Toolbars */
.toolbar {
    display: flex;
    align-items: center;
    gap: 3px;
}

.toolbar.top {
    height: 34px;
    border-bottom: 1px solid #b4c0d2;
}

.toolbar.bottom {
    height: 37px;
    padding-left: 5px;
    padding-bottom: 5px;
}

.group {
    display: flex;
    align-items: center;
}

.toolbar button,
.sidebar button {
    width: 28px;
    height: 28px;
    flex: none;
    display: flex;
    align-items: center;
    justify-content: center;
}

.toolbar button svg,
.sidebar button svg {
    width: 24px;
    height: 24px;
}

.toolbar.bottom button svg,
.views button svg,
.display button svg {
    width: 22px;
    height: 22px;
}

.display .small svg {
    width: 18px;
    height: 18px;
}

.toolbar .drop {
    width: 10px;
}

.drop::before,
.arrow {
    content: "";
    border: 4px solid transparent;
    border-top-color: #111;
    border-bottom: 0;
}

.drop:disabled::before {
    border-top-color: #bbb;
}

.toolbar button.on,
.sidebar button.on {
    background: #fbc68a;
    border: 1px solid #b08a5c;
}

.grip {
    width: 10px;
    height: 22px;
    background: radial-gradient(circle at 4px 3px, #444 1px, transparent 1px) 0 0 / 10px 6px;
}

.grip.flat {
    width: 24px;
    height: 8px;
    background-size: 6px 10px;
}

.sep {
    width: 10px;
    height: 20px;
    background: linear-gradient(#999, #999) 4px 0 / 1px 100% no-repeat;
}

.combo {
    display: flex;
    align-items: center;
    height: 22px;
    margin-right: 4px;
}

.combo svg {
    width: 20px;
    height: 20px;
}

.combo select {
    appearance: none;
    width: 66px;
    height: 22px;
    padding: 0 0 0 2px;
    border: 0;
    background: #fff;
    font: 12px "Liberation Sans", sans-serif;
    color: #111;
}

.combo .arrow {
    margin-left: 3px;
}

/* Main split */
.main {
    flex: 1;
    min-height: 0;
    display: grid;
    grid-template-columns: 355px 1fr;
}

/* Model browser */
.browser {
    display: flex;
    flex-direction: column;
    min-height: 0;
}

.tabs {
    height: 24px;
    display: flex;
    align-items: flex-end;
    padding-right: 7px;
    font-family: "Liberation Sans", sans-serif;
}

.tabs button {
    height: 21px;
    width: 55px;
    padding: 5px 6px 0 4px;
    border-right: 1px solid #555;
    border-radius: 0 3px 0 0;
}

.tabs .active {
    font-weight: bold;
    font-size: 13px;
    border-top: 1px solid #ccc;
}

.tabs .close-tab {
    width: 10px;
    height: 10px;
    margin-left: auto;
    align-self: flex-start;
    padding: 0;
    border: 0;
}

.close-tab svg {
    display: block;
}

.browser-body {
    flex: 1;
    min-height: 0;
    display: flex;
    flex-direction: column;
    margin-right: 5px;
    padding: 0 1px 0 3px;
    border-right: 1px solid #777;
}

.views {
    height: 36px;
    gap: 0;
    padding: 0 0 3px 2px;
}

.search {
    display: flex;
    align-items: center;
    height: 20px;
    background: linear-gradient(90deg, #fff 94%, #f0f0f0 94%);
    border-top: 1px solid #bbb;
}

.search input {
    flex: 1;
    min-width: 0;
    padding: 0 5px;
    border: 0;
    background: none;
    font: 12px "Liberation Sans", sans-serif;
}

.search input::placeholder {
    color: #555;
}

.search button {
    width: 26px;
    height: 12px;
}

.search .more {
    width: 20px;
}

.search svg {
    display: block;
    width: 24px;
    height: 12px;
}

.display {
    height: 38px;
    gap: 0;
    padding: 0 2px 0 2px;
}

.display .small {
    width: 24px;
}

.spacer {
    flex: 1;
}

.tree,
.properties {
    border: 1px solid #888;
    background: #fff;
}

.tree {
    flex: 1;
    min-height: 0;
    display: flex;
    flex-direction: column;
}

.tree h2 {
    height: 20px;
    padding-left: 2px;
    background: #f0f0f0;
    border-bottom: 1px solid #bbb;
    font: 10px "DejaVu Sans Mono", monospace;
    line-height: 20px;
}

.tree-view {
    flex: 1;
    min-height: 0;
    display: flex;
}

.tree ul {
    flex: 1;
    overflow: hidden;
    list-style: none;
    background: repeating-linear-gradient(#999 0 1px, #fff 1px 2px) 9px 0 / 1px 100% no-repeat,
        repeating-linear-gradient(#999 0 1px, #fff 1px 2px) 28px 0 / 1px 100% no-repeat;
}

.tree li {
    display: flex;
    align-items: center;
    height: 17px;
    padding-left: 30px;
    white-space: pre;
    font: 10px "DejaVu Sans Mono", monospace;
    line-height: 17px;
}

.tree li::before {
    content: "";
    width: 8px;
    border-top: 1px dotted #888;
}

.tree li svg {
    width: 15px;
    height: 14px;
    margin-right: 11px;
}

.vscroll {
    width: 13px;
    display: flex;
    flex-direction: column;
    background: #fafafa;
    border-left: 1px solid #ddd;
}

.vscroll button,
.hscroll button {
    width: 12px;
    height: 12px;
}

.vscroll svg,
.hscroll svg {
    display: block;
    width: 11px;
    height: 11px;
}

.vscroll .before {
    flex: 321;
}

.vscroll .thumb {
    height: 117px;
    background: #ececec;
    border: 1px solid #bbb;
}

.vscroll .after {
    flex: 98;
}

.hscroll {
    height: 13px;
    display: flex;
    background: #fafafa;
    border-top: 1px solid #ddd;
}

.hscroll .thumb {
    flex: 193;
    background: #ececec;
    border: 1px solid #bbb;
}

.hscroll .after {
    flex: 115;
}

.hscroll .corner {
    width: 13px;
    background: #f0f0f0;
}

.splitter {
    height: 8px;
    display: flex;
    align-items: center;
    justify-content: center;
    gap: 7px;
}

.splitter i {
    width: 2px;
    height: 2px;
    background: #777;
}

.splitter svg {
    width: 10px;
    height: 8px;
    margin-right: -162px;
    margin-left: 145px;
}

.properties {
    height: 213px;
    margin-bottom: 2px;
}

.properties h2 {
    height: 23px;
    padding-left: 2px;
    background: #f0f0f0;
    border-bottom: 1px solid #ccc;
    font-size: 12px;
    line-height: 24px;
}

/* Work area */
.work {
    display: flex;
    flex-direction: column;
    min-width: 0;
    min-height: 0;
    margin-right: 3px;
    border-left: 1px solid #000;
    border-right: 1px solid #333;
}

.stage {
    flex: 1;
    min-height: 0;
    display: flex;
    padding: 2px 6px 0 0;
    background: #f6f8fc;
}

.sidebar {
    width: 44px;
    display: flex;
    flex-direction: column;
    align-items: center;
    padding-top: 3px;
    background: #f0f0f0;
}

.viewport {
    flex: 1;
    min-width: 0;
    position: relative;
    background: linear-gradient(#2f557f, #5c7389 45%, #84909a 75%, #9c9c9c);
}

.model {
    display: block;
    width: 100%;
    height: 100%;
}

.triad text {
    font: 13px "Liberation Sans", sans-serif;
    fill: #e8e8e8;
}

.model-info {
    position: absolute;
    top: 2px;
    right: 4px;
    font-size: 13px;
    line-height: 20px;
    color: #e4ecf4;
}

/* Panel menu */
.panels {
    height: 152px;
    display: grid;
    grid-template-columns: 286fr 286fr 285fr 273fr 274fr 147fr;
    margin: 0 6px 5px 2px;
    border-bottom: 2px solid #000;
    font-size: 13px;
}

.column {
    display: flex;
    flex-direction: column;
}

.column button {
    height: 21px;
    padding-left: 6px;
    border-top: 1px solid #fff;
    border-left: 1px solid #fff;
    border-bottom: 1px solid #555;
    border-right: 1px solid #555;
    line-height: 18px;
}

.pages {
    padding-left: 16px;
}

.pages label {
    display: flex;
    align-items: center;
    gap: 16px;
    height: 21px;
}

.pages input {
    appearance: none;
    width: 11px;
    height: 11px;
    margin: 0;
    border: 1px solid #222;
    border-right-color: #ddd;
    border-bottom-color: #ddd;
    border-radius: 50%;
}

.pages input:checked {
    background: radial-gradient(circle, #000 2px, #fff 3px);
}

/* Status bar */
.statusbar {
    height: 22px;
    display: flex;
    gap: 2px;
    border-top: 1px solid #aaa;
    font-size: 13px;
    line-height: 21px;
    color: #333;
}

.statusbar .message {
    flex: 1;
    padding-left: 13px;
}

.cell {
    width: 124px;
    margin-top: 1px;
    padding-left: 2px;
    border-top: 1px solid #111;
    border-left: 1px solid #111;
    line-height: 19px;
}

.cell.wide {
    width: 139px;
}

/* Diagonal stamp across the whole window */
.watermark {
    position: fixed;
    inset: 0;
    display: flex;
    align-items: center;
    justify-content: center;
    padding-right: 24px;
    overflow: hidden;
    pointer-events: none;
}

.watermark span {
    transform: rotate(-45deg);
    white-space: nowrap;
    font: 300 264px "Noto Sans CJK SC", sans-serif;
    line-height: 1;
    color: rgba(20, 20, 20, 0.32);
}
```
